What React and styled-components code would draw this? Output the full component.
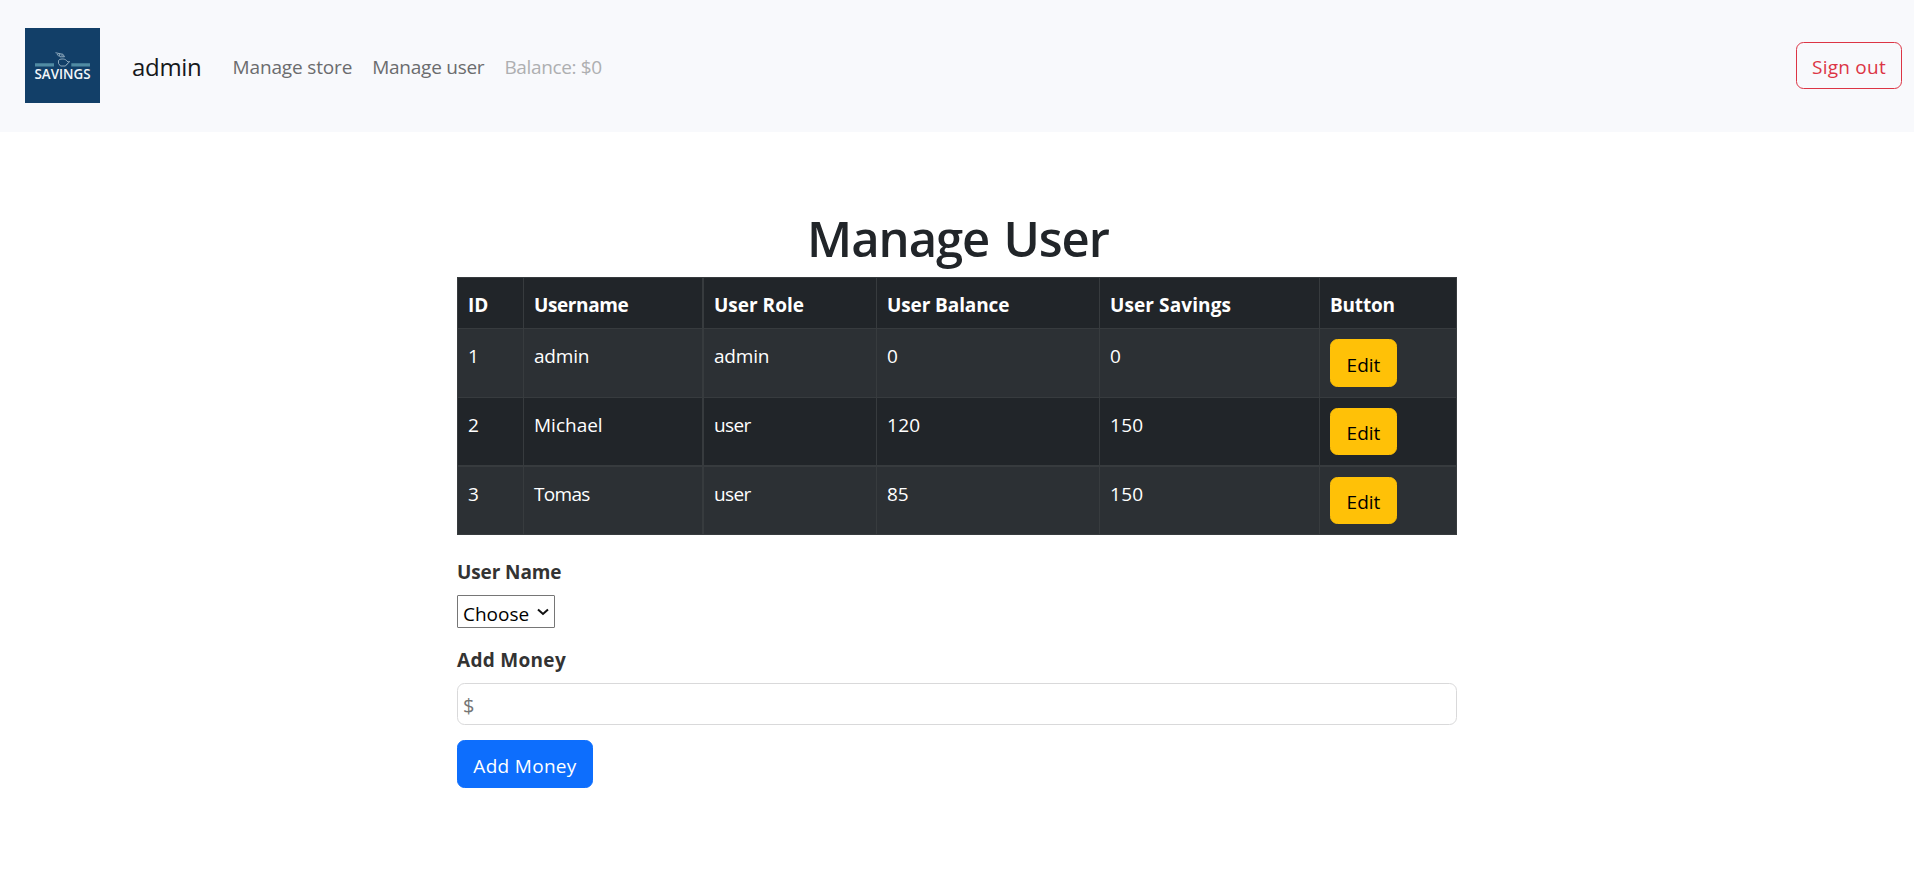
import React from 'react';
import styled, { createGlobalStyle, css } from 'styled-components';

const GlobalStyle = createGlobalStyle`
  *, *::before, *::after { box-sizing: border-box; }
  body {
    margin: 0;
    background: #fff;
    color: #212529;
    font-family: 'Open Sans', 'Noto Sans', sans-serif;
    font-size: 19px;
    line-height: 30px;
  }
`;

const Navbar = styled.nav`
  display: flex;
  align-items: center;
  height: 132px;
  padding: 0 12px 1px 25px;
  background: #f8f9fc;
`;

const Logo = styled.svg`
  display: block;
  width: 75px;
  height: 75px;
  margin-right: 32px;
`;

const Brand = styled.a`
  margin: 3px 31px 0 0;
  color: #16181a;
  font-size: 24px;
  letter-spacing: -0.3px;
`;

const NavLinks = styled.div`
  display: flex;
  flex: 1;
  gap: 20px;
  padding-top: 2px;
`;

const NavLink = styled.a`
  color: ${(p) => (p.$muted ? '#aeafb1' : '#6b6c6e')};
  letter-spacing: ${(p) => p.$track || 0}px;
  white-space: nowrap;
`;

const variants = {
  danger: css`
    color: #dc3545;
    border-color: #dc3545;
    background: transparent;
  `,
  warning: css`
    color: #000;
    border-color: #ffc107;
    background: #ffc107;
  `,
  primary: css`
    color: #fff;
    border-color: #0d6efd;
    background: #0d6efd;
  `,
};

const Button = styled.button`
  display: block;
  width: ${(p) => p.$width}px;
  height: ${(p) => p.$height || 47}px;
  padding: 3px 0 0;
  border: 1px solid;
  border-radius: 7.5px;
  font: inherit;
  white-space: nowrap;
  letter-spacing: ${(p) => p.$track || 0}px;
  ${(p) => variants[p.$variant]}
`;

const Page = styled.main`
  width: 1000px;
  margin: 76px auto 0;
`;

const Title = styled.h1`
  margin: 0 0 9px;
  padding-left: 2px;
  text-align: center;
  font-size: 49px;
  font-weight: 600;
  line-height: 60px;
  letter-spacing: -1.05px;
  word-spacing: 2.5px;
`;

const Table = styled.table`
  width: 1000px;
  table-layout: fixed;
  border-collapse: separate;
  border-spacing: 0;
  border: 1px solid #373b3e;
  color: #fff;
`;

const HeadCell = styled.th`
  height: 50px;
  padding: 12px 10px 8px;
  border-right: ${(p) => (p.$last ? 0 : p.$thick ? 2 : 1)}px solid #373b3e;
  background: #212529;
  text-align: left;
  vertical-align: top;
  font-weight: 700;
  letter-spacing: ${(p) => p.$track || 0}px;
  white-space: nowrap;
`;

const Cell = styled.td`
  height: ${(p) => p.$height}px;
  padding: 12px 10px 0;
  border-top: ${(p) => p.$top}px solid #373b3e;
  border-right: ${(p) => (p.$last ? 0 : p.$thick ? 2 : 1)}px solid #373b3e;
  background: ${(p) => (p.$striped ? '#2c3034' : '#212529')};
  vertical-align: top;
  letter-spacing: ${(p) => p.$track || 0}px;
  ${(p) => p.$last && 'padding-top: 10px;'}
`;

const Form = styled.form`
  padding-top: 22px;
`;

const Label = styled.label`
  display: block;
  color: #333;
  font-weight: 700;
  letter-spacing: ${(p) => p.$track || 0}px;
`;

const SelectBox = styled.div`
  display: flex;
  align-items: center;
  justify-content: space-between;
  width: 98px;
  height: 33px;
  margin: 8px 0 17px;
  padding: 4px 5px 0;
  border: 1px solid #767676;
  border-radius: 1px;
  color: #000;
  svg { margin-top: -4px; }
`;

const MoneyInput = styled.input`
  display: block;
  width: 100%;
  height: 42px;
  margin: 8px 0 15px;
  padding: 3px 5px 0;
  border: 1px solid #d9d9da;
  border-radius: 7.5px;
  font: inherit;
  font-size: 20px;
  outline: 0;
  &::placeholder { color: #757575; opacity: 1; }
`;

const columns = [
  { name: 'ID', width: 66 },
  { name: 'Username', width: 180, thick: true, track: -0.4 },
  { name: 'User Role', width: 173 },
  { name: 'User Balance', width: 223, track: -0.1 },
  { name: 'User Savings', width: 220, track: 0.1 },
  { name: 'Button', width: 136, last: true, track: -0.2 },
];

const users = [
  { cells: ['1', 'admin', 'admin', '0', '0'], height: 69, top: 1, button: 48 },
  { cells: ['2', 'Michael', 'user', '120', '150'], height: 68, top: 1, button: 47 },
  { cells: ['3', 'Tomas', 'user', '85', '150'], height: 69, top: 2, button: 47 },
];

const tracking = { admin: -0.2, user: -0.6, Tomas: -0.7, 120: 0.3, 150: 0.3 };

function SavingsLogo() {
  return (
    <Logo viewBox="0 0 75 75">
      <rect width="75" height="75" fill="#123f68" />
      <path d="M10 36.8h19M46.3 36.8H65" stroke="#508ba3" strokeWidth="3.2" />
      <g fill="none" stroke="#a9c0cf" strokeWidth=".8">
        <path d="M33.500 32.500c1-1.800 6-2.200 8 0l1.500 1.500 1.500-.5-1.500 2-1 .5-1.500 2h-5l-2-2.500z" />
        <path d="M30.500 24.700l3.500.8M32 26l2 2.500M34 25.500l4 .8 1.500 2.500-4.500 0zM36 26.500l2 2" />
      </g>
      <text x="9.500" y="50.800" textLength="56" fill="#f4f7fa" fontFamily="'Open Sans', sans-serif" fontWeight="600" fontSize="14" lengthAdjust="spacingAndGlyphs">
        SAVINGS
      </text>
    </Logo>
  );
}

export default function App() {
  return (
    <>
      <GlobalStyle />
      <Navbar>
        <SavingsLogo />
        <Brand>admin</Brand>
        <NavLinks>
          <NavLink $track={-0.15}>Manage store</NavLink>
          <NavLink $track={-0.25}>Manage user</NavLink>
          <NavLink $track={-0.35} $muted>Balance: $0</NavLink>
        </NavLinks>
        <Button $variant="danger" $width={106} $track={0.25}>Sign out</Button>
      </Navbar>
      <Page>
        <Title>Manage User</Title>
        <Table>
          <colgroup>
            {columns.map((c) => <col key={c.name} width={c.width} />)}
          </colgroup>
          <thead>
            <tr>
              {columns.map((c) => (
                <HeadCell key={c.name} $thick={c.thick} $last={c.last} $track={c.track}>{c.name}</HeadCell>
              ))}
            </tr>
          </thead>
          <tbody>
            {users.map((u, row) => (
              <tr key={u.cells[0]}>
                {u.cells.map((text, i) => (
                  <Cell key={columns[i].name} $height={u.height} $top={u.top} $striped={row % 2 === 0} $thick={columns[i].thick} $track={tracking[text]}>
                    {text}
                  </Cell>
                ))}
                <Cell $height={u.height} $top={u.top} $striped={row % 2 === 0} $last>
                  <Button type="button" $variant="warning" $width={67} $height={u.button}>Edit</Button>
                </Cell>
              </tr>
            ))}
          </tbody>
        </Table>
        <Form>
          <Label $track={-0.1}>User Name</Label>
          <SelectBox role="combobox">
            Choose
            <svg width="12" height="8" viewBox="0 0 12 8" fill="none" stroke="#111" strokeWidth="2">
              <path d="M1 1.500l5 4.500 5-4.500" />
            </svg>
          </SelectBox>
          <Label $track={0.3}>Add Money</Label>
          <MoneyInput placeholder="$" />
          <Button type="button" $variant="primary" $width={136} $height={48} $track={0.3}>Add Money</Button>
        </Form>
      </Page>
    </>
  );
}
